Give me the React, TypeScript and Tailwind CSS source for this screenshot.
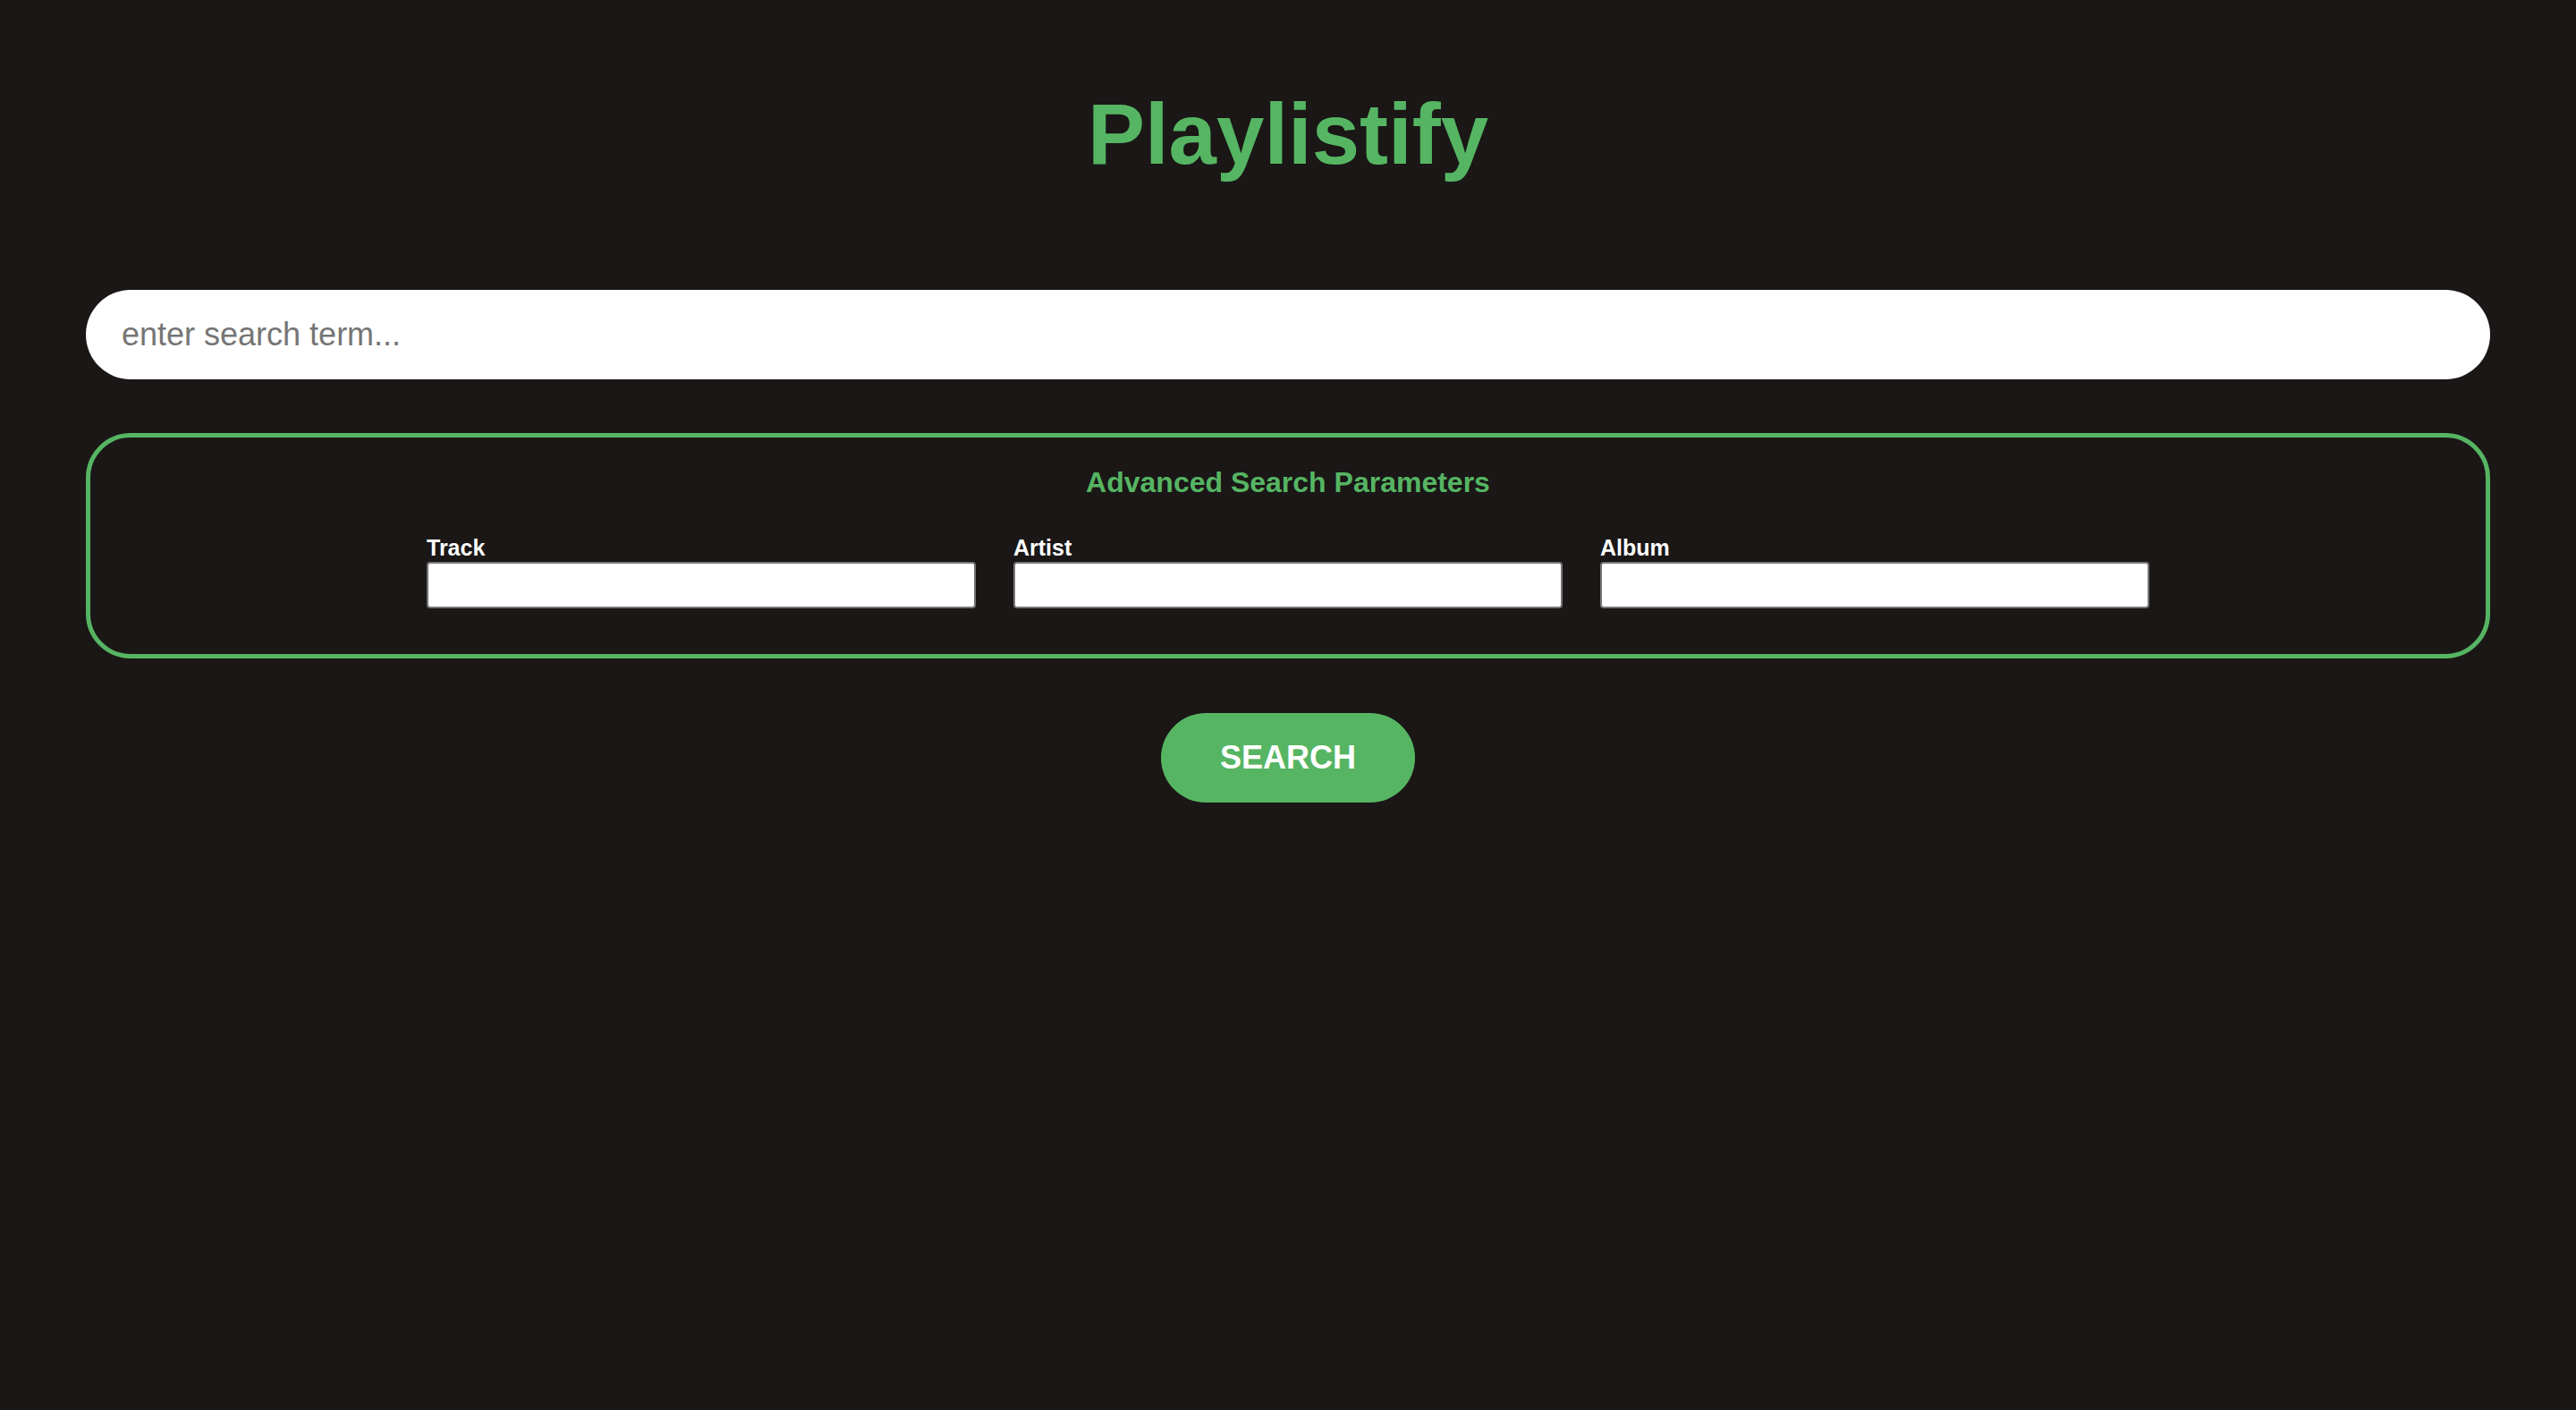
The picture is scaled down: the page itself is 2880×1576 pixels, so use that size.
import React, { useState } from "react";

const fields = ["Track", "Artist", "Album"];

const App = () => {
  const [term, setTerm] = useState("");
  const [params, setParams] = useState<Record<string, string>>({
    Track: "",
    Artist: "",
    Album: "",
  });

  return (
    <div className="min-h-screen bg-[#1a1716] font-['Liberation_Sans',Arial,sans-serif]">
      <div className="flex flex-col items-center px-24 pt-[95px]">
        <h1 className="text-center text-[96px] font-bold leading-[normal] text-[#56b563]">
          Playlistify
        </h1>

        <input
          type="text"
          value={term}
          onChange={(e) => setTerm(e.target.value)}
          placeholder="enter search term..."
          className="mt-[119px] h-[100px] w-full rounded-full bg-white px-[40px] text-[36px] text-black outline-none placeholder:text-[#757575]"
        />

        <div className="mt-[60px] flex w-full flex-col items-center rounded-[50px] border-[5px] border-[#56b563] pt-[32px] pb-[51px]">
          <h3 className="mb-[40px] text-[32px] font-bold leading-[normal] text-[#56b563]">
            Advanced Search Parameters
          </h3>
          <div className="flex justify-center gap-[42px]">
            {fields.map((f) => (
              <div key={f} className="flex w-[614px] flex-col">
                <label
                  htmlFor={f}
                  className="text-[25px] font-bold leading-[29px] text-white"
                >
                  {f}
                </label>
                <input
                  id={f}
                  type="text"
                  value={params[f]}
                  onChange={(e) =>
                    setParams((prev) => ({ ...prev, [f]: e.target.value }))
                  }
                  className="mt-px h-[52px] w-full rounded-[4px] border-2 border-[#767676] bg-white px-2 text-[24px] outline-none"
                />
              </div>
            ))}
          </div>
        </div>

        <button
          type="button"
          className="mt-[61px] h-[100px] w-[284px] rounded-full bg-[#56b563] text-[36px] font-bold text-white"
        >
          SEARCH
        </button>
      </div>
    </div>
  );
};

export default App;
